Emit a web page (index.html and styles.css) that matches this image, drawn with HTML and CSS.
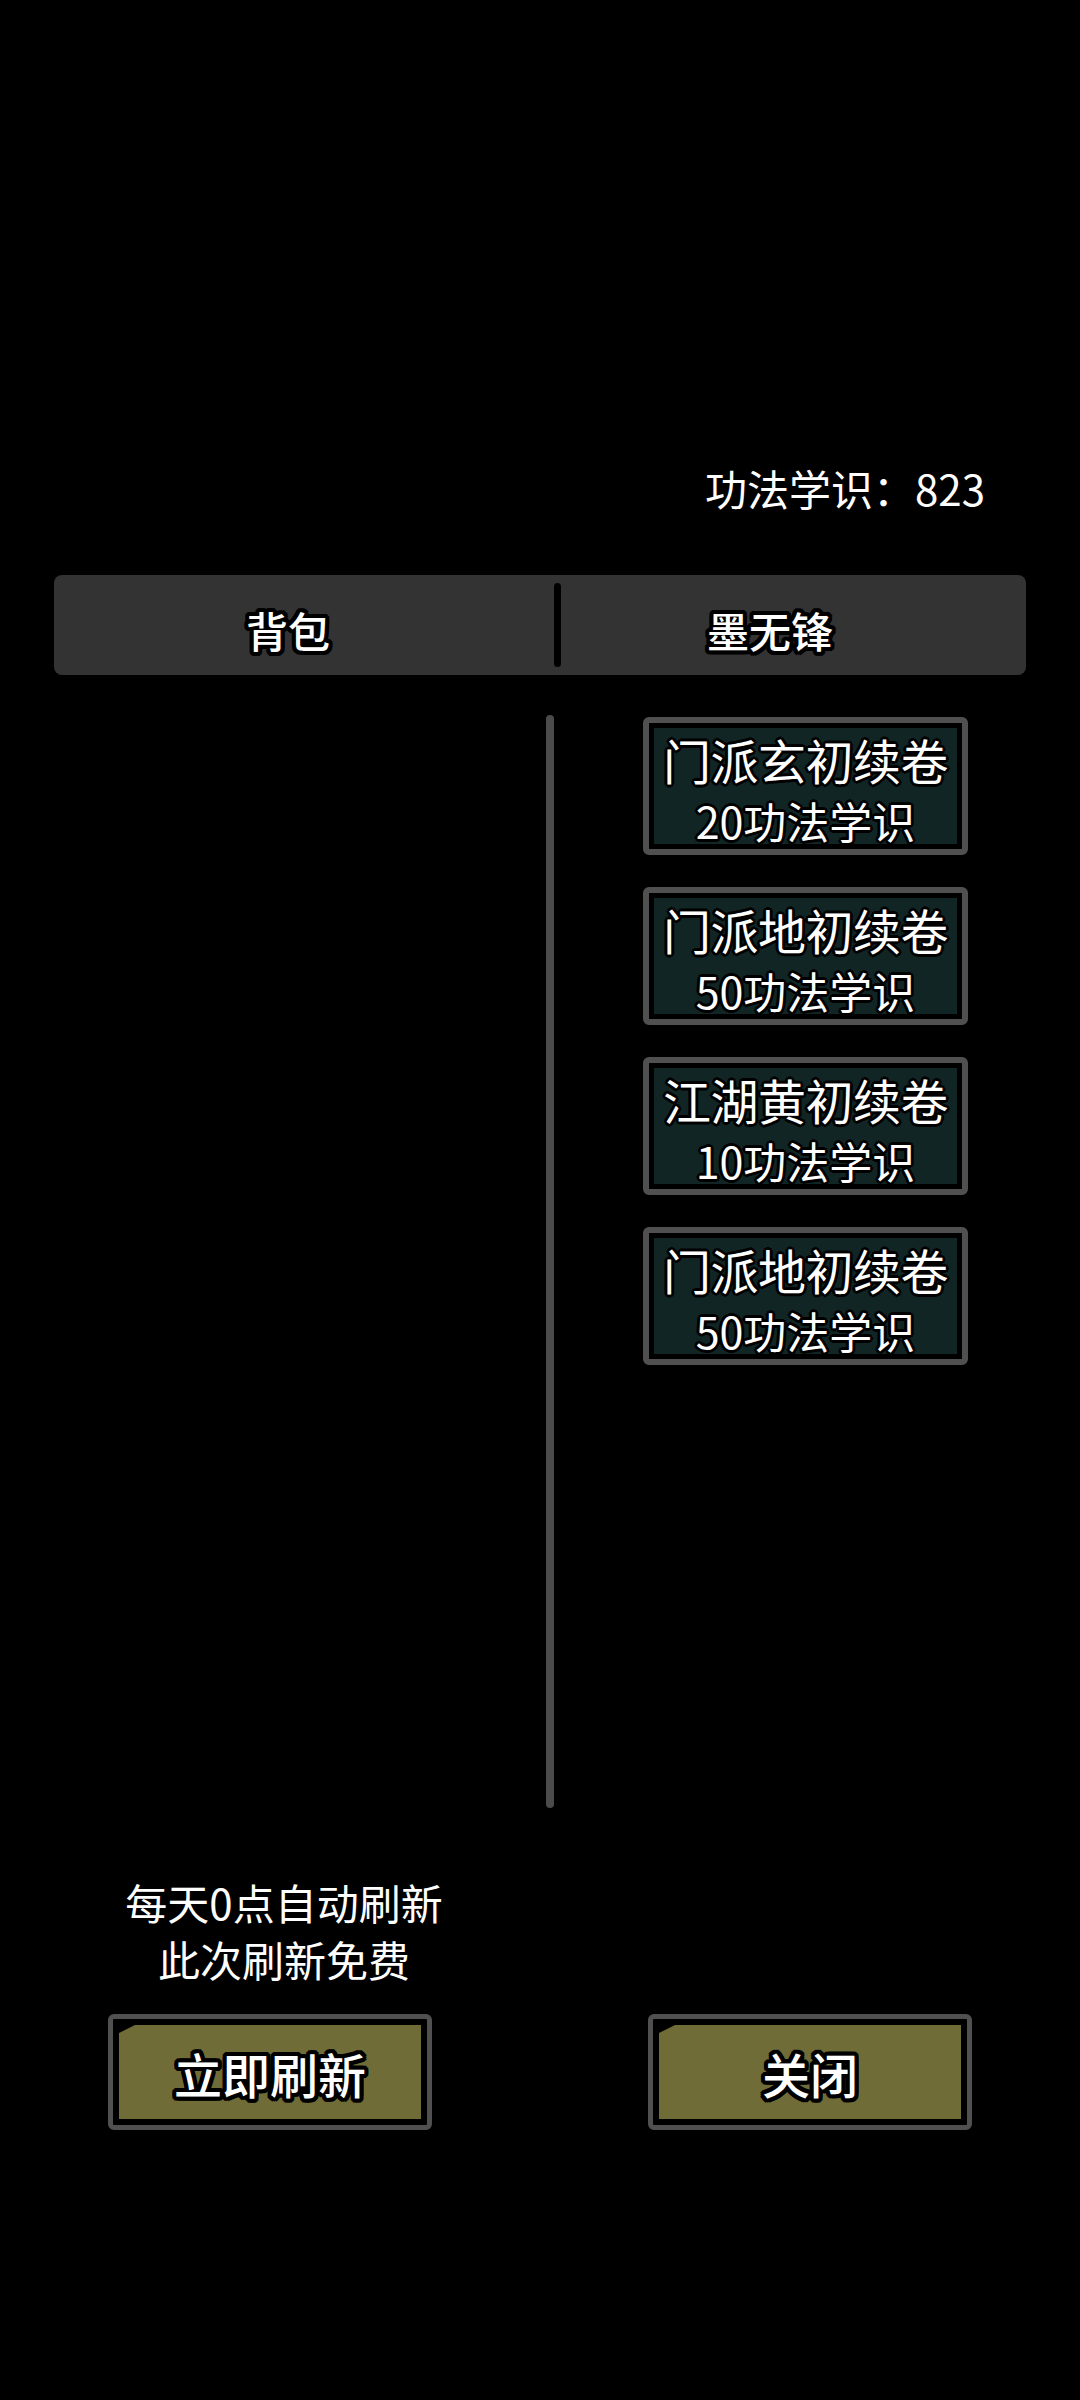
FILE: index.html
```html
<!DOCTYPE html>
<html lang="zh-CN">
<head>
<meta charset="utf-8">
<title>功法商店</title>
<link rel="stylesheet" href="styles.css">
</head>
<body>
<div class="screen">
  <div class="score">功法学识：823</div>

  <div class="tabs">
    <div class="tab tab-bag">背包</div>
    <div class="tab-divider"></div>
    <div class="tab tab-shop">墨无锋</div>
  </div>

  <div class="content">
    <div class="bag"></div>
    <div class="scrollbar"></div>
    <div class="shop">
      <div class="item"><div class="item-fill"><div class="item-name">门派玄初续卷</div><div class="item-price">20功法学识</div></div></div>
      <div class="item"><div class="item-fill"><div class="item-name">门派地初续卷</div><div class="item-price">50功法学识</div></div></div>
      <div class="item"><div class="item-fill"><div class="item-name">江湖黄初续卷</div><div class="item-price">10功法学识</div></div></div>
      <div class="item"><div class="item-fill"><div class="item-name">门派地初续卷</div><div class="item-price">50功法学识</div></div></div>
    </div>
  </div>

  <div class="notice">
    <p>每天0点自动刷新</p>
    <p>此次刷新免费</p>
  </div>

  <div class="actions">
    <div class="btn"><div class="btn-fill">立即刷新</div></div>
    <div class="btn"><div class="btn-fill">关闭</div></div>
  </div>
</div>
</body>
</html>
```

FILE: styles.css
```css
html, body {
  margin: 0;
  padding: 0;
  background: #000;
}

body {
  width: 1080px;
  min-height: 2400px;
  font-family: "Noto Sans CJK SC", "Noto Sans", sans-serif;
  color: #fff;
}

.screen {
  width: 1080px;
  height: 2400px;
  padding-top: 463px;
  box-sizing: border-box;
  display: flex;
  flex-direction: column;
}

.score {
  height: 50px;
  line-height: 50px;
  font-size: 42px;
  text-align: right;
  padding-right: 95px;
}

.tabs {
  margin: 62px 0 0 54px;
  width: 972px;
  height: 100px;
  background: #333333;
  border-radius: 8px;
  display: flex;
  align-items: center;
}

.tab {
  font-size: 42px;
  font-weight: 500;
  line-height: 60px;
  text-align: center;
  padding-top: 10px;
  text-shadow:
    4px 0 #000, -4px 0 #000, 0 4px #000, 0 -4px #000,
    3px 3px #000, -3px 3px #000, 3px -3px #000, -3px -3px #000,
    4px 2px #000, -4px 2px #000, 4px -2px #000, -4px -2px #000,
    2px 4px #000, -2px 4px #000, 2px -4px #000, -2px -4px #000;
}

.tab-bag {
  width: 468px;
}

.tab-divider {
  width: 7px;
  height: 84px;
  margin-left: 32px;
  background: #000;
  border-radius: 4px;
}

.tab-shop {
  width: 418px;
}

.content {
  margin-top: 40px;
  height: 1093px;
  display: flex;
}

.bag {
  width: 546px;
}

.scrollbar {
  width: 8px;
  height: 100%;
  background: #4b4b4b;
  border-radius: 4px;
}

.shop {
  padding: 2px 0 0 89px;
  display: flex;
  flex-direction: column;
  gap: 32px;
}

.item {
  width: 325px;
  height: 138px;
  box-sizing: border-box;
  border: 6px solid #505050;
  border-radius: 6px;
  background: #000;
  padding: 5px;
}

.item-fill {
  height: 100%;
  background: #122525;
  text-align: center;
  padding-top: 1px;
  box-sizing: border-box;
  text-shadow:
    3px 0 #000, -3px 0 #000, 0 3px #000, 0 -3px #000,
    2px 2px #000, -2px 2px #000, 2px -2px #000, -2px -2px #000;
}

.item-name {
  font-size: 48px;
  line-height: 60px;
  white-space: nowrap;
  letter-spacing: -0.5px;
}

.item-price {
  font-size: 43px;
  line-height: 62px;
  white-space: nowrap;
}

.notice {
  margin-top: 65px;
  width: 568px;
  text-align: center;
  font-size: 42px;
  line-height: 57px;
}

.notice p {
  margin: 0;
}

.actions {
  margin-top: 27px;
  padding-left: 108px;
  display: flex;
  gap: 216px;
}

.btn {
  width: 324px;
  height: 116px;
  box-sizing: border-box;
  border: 5px solid #505050;
  border-radius: 6px;
  background: #000;
  padding: 6px;
}

.btn-fill {
  height: 100%;
  background: #6f6c38;
  clip-path: polygon(16px 0, 100% 0, 100% 100%, 0 100%, 0 8px);
  display: flex;
  align-items: center;
  justify-content: center;
  font-size: 48px;
  font-weight: 500;
  padding-top: 2px;
  box-sizing: border-box;
  text-shadow:
    4px 0 #000, -4px 0 #000, 0 4px #000, 0 -4px #000,
    3px 3px #000, -3px 3px #000, 3px -3px #000, -3px -3px #000,
    4px 2px #000, -4px 2px #000, 4px -2px #000, -4px -2px #000,
    2px 4px #000, -2px 4px #000, 2px -4px #000, -2px -4px #000;
}
```
